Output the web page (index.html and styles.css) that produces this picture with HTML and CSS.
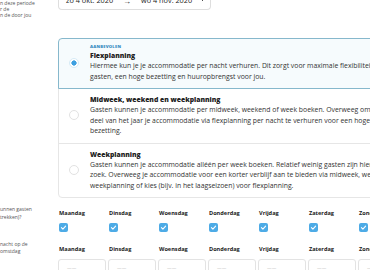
FILE: index.html
```html
<!DOCTYPE html>
<html lang="nl">
<head>
  <meta charset="UTF-8">
  <title>Planning instellen</title>
  <link rel="stylesheet" href="styles.css">
</head>
<body>
  <div class="page">

    <!-- Periode -->
    <div class="label label-period">n deze periode<br>r de<br>n de door jou</div>
    <div class="period">
      <span>zo 4 okt. 2020</span>
      <span class="arrow">&rarr;</span>
      <span>wo 4 nov. 2020</span>
      <span class="period-dot"></span>
    </div>

    <!-- Planning type -->
    <div></div>
    <div class="plans">
      <div class="plan plan-selected">
        <span class="radio"></span>
        <div class="plan-body">
          <div class="badge">AANBEVOLEN</div>
          <div class="plan-title">Flexplanning</div>
          <p>Hiermee kun je je accommodatie per nacht verhuren. Dit zorgt voor maximale flexibiliteit voor<br>
          gasten, een hoge bezetting en huuropbrengst voor jou.</p>
        </div>
      </div>
      <div class="plan">
        <span class="radio"></span>
        <div class="plan-body">
          <div class="plan-title">Midweek, weekend en weekplanning</div>
          <p>Gasten kunnen je accommodatie per midweek, weekend of week boeken. Overweeg om een<br>
          deel van het jaar je accommodatie via flexplanning per nacht te verhuren voor een hogere<br>
          bezetting.</p>
        </div>
      </div>
      <div class="plan">
        <span class="radio"></span>
        <div class="plan-body">
          <div class="plan-title">Weekplanning</div>
          <p>Gasten kunnen je accommodatie alléén per week boeken. Relatief weinig gasten zijn hiernaar op<br>
          zoek. Overweeg je accommodatie voor een korter verblijf aan te bieden via midweek, weekend- of<br>
          weekplanning of kies (bijv. in het laagseizoen) voor flexplanning.</p>
        </div>
      </div>
    </div>

    <!-- Aankomstdagen -->
    <div class="label label-days">unnen gasten<br>trekken)?</div>
    <div class="days">
      <div class="day"><div class="day-name">Maandag</div><span class="check"><svg viewBox="0 0 9 9"><polyline points="2.4,4.6 3.9,6.1 6.6,3.1"/></svg></span></div>
      <div class="day"><div class="day-name">Dinsdag</div><span class="check"><svg viewBox="0 0 9 9"><polyline points="2.4,4.6 3.9,6.1 6.6,3.1"/></svg></span></div>
      <div class="day"><div class="day-name">Woensdag</div><span class="check"><svg viewBox="0 0 9 9"><polyline points="2.4,4.6 3.9,6.1 6.6,3.1"/></svg></span></div>
      <div class="day"><div class="day-name">Donderdag</div><span class="check"><svg viewBox="0 0 9 9"><polyline points="2.4,4.6 3.9,6.1 6.6,3.1"/></svg></span></div>
      <div class="day"><div class="day-name">Vrijdag</div><span class="check"><svg viewBox="0 0 9 9"><polyline points="2.4,4.6 3.9,6.1 6.6,3.1"/></svg></span></div>
      <div class="day"><div class="day-name">Zaterdag</div><span class="check"><svg viewBox="0 0 9 9"><polyline points="2.4,4.6 3.9,6.1 6.6,3.1"/></svg></span></div>
      <div class="day"><div class="day-name">Zondag</div><span class="check"><svg viewBox="0 0 9 9"><polyline points="2.4,4.6 3.9,6.1 6.6,3.1"/></svg></span></div>
    </div>

    <!-- Minimaal verblijf -->
    <div class="label label-stay">nacht op de<br>omstdag</div>
    <div class="days days-stay">
      <div class="day"><div class="day-name">Maandag</div><div class="field">&ndash;&ndash; &ndash;&ndash;</div></div>
      <div class="day"><div class="day-name">Dinsdag</div><div class="field">&ndash;&ndash; &ndash;&ndash;</div></div>
      <div class="day"><div class="day-name">Woensdag</div><div class="field">&ndash;&ndash; &ndash;&ndash;</div></div>
      <div class="day"><div class="day-name">Donderdag</div><div class="field">&ndash;&ndash; &ndash;&ndash;</div></div>
      <div class="day"><div class="day-name">Vrijdag</div><div class="field">&ndash;&ndash; &ndash;&ndash;</div></div>
      <div class="day"><div class="day-name">Zaterdag</div><div class="field">&ndash;&ndash; &ndash;&ndash;</div></div>
      <div class="day"><div class="day-name">Zondag</div><div class="field">&ndash;&ndash; &ndash;&ndash;</div></div>
    </div>

  </div>
</body>
</html>
```

FILE: styles.css
```css
body {
  margin: 0;
  overflow: hidden;
  background: #fff;
  font-family: "Open Sans", "Liberation Sans", sans-serif;
  color: #333;
}

.page {
  display: grid;
  grid-template-columns: 40px 420px;
  column-gap: 18px;
  align-items: start;
  margin-top: -18px;
}

.label {
  font-size: 5px;
  line-height: 6px;
  color: #555;
}

.label-period {
  padding-top: 18px;
}

.label-days {
  padding-top: 7px;
  line-height: 8px;
}

.label-stay {
  padding-top: 9px;
  line-height: 7px;
}

/* periode */
.period {
  display: flex;
  align-items: center;
  gap: 10px;
  width: 137px;
  padding: 13px 7px 3px 7px;
  border: 1px solid #dedede;
  border-top: none;
  border-radius: 0 0 4px 4px;
  font-size: 7.3px;
  line-height: 11px;
  color: #222;
  white-space: nowrap;
}

.arrow {
  font-size: 8px;
}

.period-dot {
  width: 2px;
  height: 2px;
  border-radius: 50%;
  background: #222;
  margin-left: auto;
  margin-top: -2px;
}

/* planning opties */
.plans {
  margin-top: 21px;
}

.plan {
  display: flex;
  align-items: center;
  border: 1px solid #e6e6e6;
  margin-top: -1px;
  padding: 5px 10px 6px 10px;
  position: relative;
}

.plan:first-child {
  border-radius: 4px 4px 0 0;
  padding-top: 4px;
}

.plan:last-child {
  border-radius: 0 0 4px 4px;
}

.plan-selected {
  border-color: #86b8cc;
  background: #f6fbfd;
  z-index: 1;
}

.radio {
  flex: none;
  width: 8px;
  height: 8px;
  border: 1px solid #e2e2e2;
  border-radius: 50%;
  background: #fff;
  margin-right: 11px;
}

.plan-selected .radio {
  border-color: #d6ebf6;
  background: radial-gradient(circle, #3d9fe0 0 2.4px, #fff 2.8px);
}

.plan-body {
  flex: 1;
}

.badge {
  font-size: 4.2px;
  line-height: 7px;
  font-weight: 800;
  letter-spacing: 0.2px;
  color: #3a8dc2;
}

.plan-title {
  font-size: 6.8px;
  line-height: 11px;
  font-weight: 800;
  color: #222;
}

.plan p {
  margin: 0;
  font-size: 6.85px;
  line-height: 10.5px;
  white-space: nowrap;
}

/* dagen */
.days {
  display: flex;
  margin-top: 11px;
}

.day {
  width: 50px;
  flex: none;
}

.day-name {
  font-size: 5.6px;
  line-height: 8px;
  font-weight: 700;
  color: #222;
  padding-left: 1px;
}

.check {
  display: block;
  width: 9px;
  height: 9px;
  margin: 6px 0 0 1px;
  border-radius: 2px;
  background: #4dabe6;
}

.check svg {
  display: block;
  width: 9px;
  height: 9px;
  fill: none;
  stroke: #fff;
  stroke-width: 1.1;
  stroke-linecap: round;
  stroke-linejoin: round;
}

.days-stay {
  margin-top: 13px;
}

.field {
  width: 48px;
  height: 22px;
  margin-top: 6px;
  border: 1px solid #e3e3e3;
  border-radius: 3px;
  box-sizing: border-box;
  padding: 5px 0 0 8px;
  font-size: 5px;
  color: #c4c4c4;
  letter-spacing: -0.5px;
}
```
